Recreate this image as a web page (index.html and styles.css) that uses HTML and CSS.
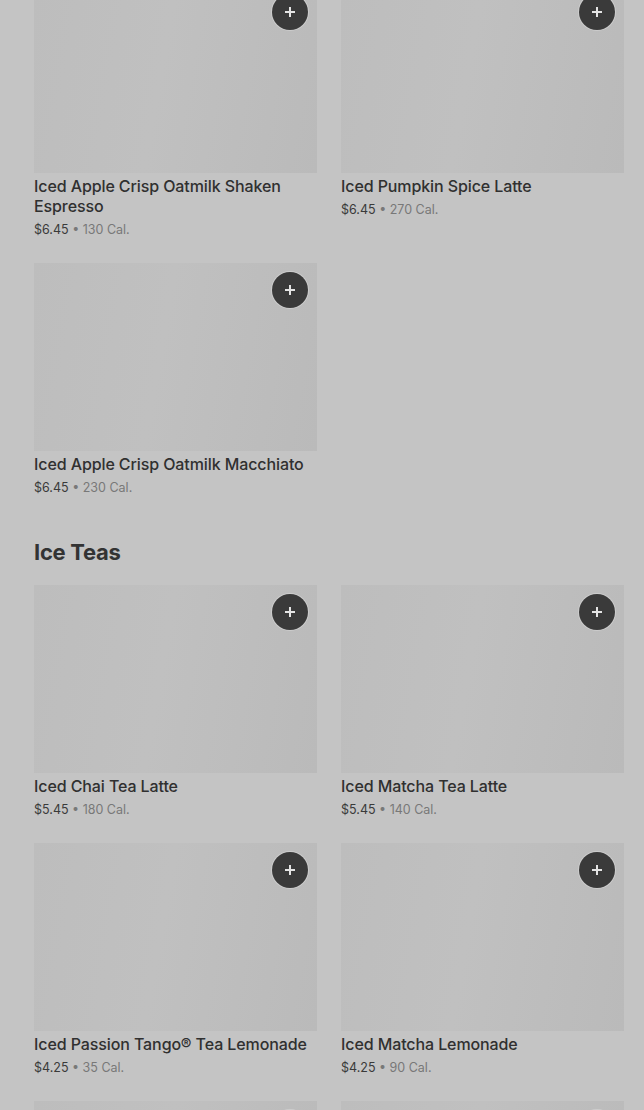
FILE: index.html
```html
<!DOCTYPE html>
<html lang="en">
<head>
    <meta charset="UTF-8">
    <title>Menu</title>
    <link rel="stylesheet" href="styles.css">
</head>
<body>
<div class="menu">
    <div class="grid">
        <div class="card">
            <div class="pic"><span class="add"><svg viewBox="0 0 12 12"><path d="M6 1v10M1 6h10"/></svg></span></div>
            <div class="name">Iced Apple Crisp Oatmilk Shaken Espresso</div>
            <div class="price">$6.45 <span class="cal">&bull; 130 Cal.</span></div>
        </div>
        <div class="card">
            <div class="pic"><span class="add"><svg viewBox="0 0 12 12"><path d="M6 1v10M1 6h10"/></svg></span></div>
            <div class="name">Iced Pumpkin Spice Latte</div>
            <div class="price">$6.45 <span class="cal">&bull; 270 Cal.</span></div>
        </div>
        <div class="card">
            <div class="pic"><span class="add"><svg viewBox="0 0 12 12"><path d="M6 1v10M1 6h10"/></svg></span></div>
            <div class="name">Iced Apple Crisp Oatmilk Macchiato</div>
            <div class="price">$6.45 <span class="cal">&bull; 230 Cal.</span></div>
        </div>
    </div>

    <h2 class="section">Ice Teas</h2>
    <div class="grid">
        <div class="card">
            <div class="pic"><span class="add"><svg viewBox="0 0 12 12"><path d="M6 1v10M1 6h10"/></svg></span></div>
            <div class="name">Iced Chai Tea Latte</div>
            <div class="price">$5.45 <span class="cal">&bull; 180 Cal.</span></div>
        </div>
        <div class="card">
            <div class="pic"><span class="add"><svg viewBox="0 0 12 12"><path d="M6 1v10M1 6h10"/></svg></span></div>
            <div class="name">Iced Matcha Tea Latte</div>
            <div class="price">$5.45 <span class="cal">&bull; 140 Cal.</span></div>
        </div>
        <div class="card">
            <div class="pic"><span class="add"><svg viewBox="0 0 12 12"><path d="M6 1v10M1 6h10"/></svg></span></div>
            <div class="name">Iced Passion Tango&reg; Tea Lemonade</div>
            <div class="price">$4.25 <span class="cal">&bull; 35 Cal.</span></div>
        </div>
        <div class="card">
            <div class="pic"><span class="add"><svg viewBox="0 0 12 12"><path d="M6 1v10M1 6h10"/></svg></span></div>
            <div class="name">Iced Matcha Lemonade</div>
            <div class="price">$4.25 <span class="cal">&bull; 90 Cal.</span></div>
        </div>
        <div class="card">
            <div class="pic"><span class="add"><svg viewBox="0 0 12 12"><path d="M6 1v10M1 6h10"/></svg></span></div>
        </div>
        <div class="card">
            <div class="pic"><span class="add"><svg viewBox="0 0 12 12"><path d="M6 1v10M1 6h10"/></svg></span></div>
        </div>
    </div>
</div>
</body>
</html>
```

FILE: styles.css
```css
*{
    padding: 0;
    margin: 0;
    box-sizing: border-box;
}
body{
    background: #c4c4c4;
    font-family: Inter, "Noto Sans", sans-serif;
    color: #2e2e2e;
    overflow: hidden;
}
.menu{
    margin-top: -15px;
    padding-left: 34px;
    width: 624px;
}
.grid{
    display: grid;
    grid-template-columns: 283px 283px;
    column-gap: 24px;
    row-gap: 23px;
}
.pic{
    height: 188px;
    background: linear-gradient(100deg, #bdbdbd 0%, #c0c0c0 45%, #bababa 100%);
    position: relative;
}
.add{
    position: absolute;
    top: 9px;
    right: 9px;
    width: 36px;
    height: 36px;
    border-radius: 50%;
    background: #3a3a3a;
    display: flex;
    align-items: center;
    justify-content: center;
    box-shadow: 0 0 0 1px rgba(255,255,255,.25);
}
.add svg{
    width: 12px;
    height: 12px;
    stroke: #e4e4e4;
    stroke-width: 2;
    fill: none;
}
.name{
    margin-top: 3px;
    font-size: 16px;
    font-weight: 500;
    line-height: 20px;
    letter-spacing: -0.1px;
    color: #303030;
}
.price{
    margin-top: 4px;
    font-size: 12.5px;
    line-height: 20px;
    color: #3a3a3a;
}
.cal{
    color: #787878;
}
.section{
    margin-top: 40px;
    margin-bottom: 19px;
    font-size: 22px;
    font-weight: 700;
    line-height: 28px;
    letter-spacing: -0.3px;
    color: #333;
}
```
